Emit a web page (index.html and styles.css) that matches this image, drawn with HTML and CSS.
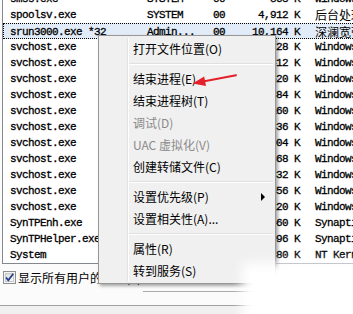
FILE: index.html
```html
<!DOCTYPE html>
<html>
<head>
<meta charset="utf-8">
<link rel="stylesheet" href="styles.css">
</head>
<body>
<div class="window">
  <div class="list">
    <div class="row"><span class="c-name">smss.exe</span><span class="c-user">SYSTEM</span><span class="c-cpu">00</span><span class="c-mem">368 K</span><span class="c-desc">Windows 会话管理器</span></div>
    <div class="row"><span class="c-name">spoolsv.exe</span><span class="c-user">SYSTEM</span><span class="c-cpu">00</span><span class="c-mem">4,912 K</span><span class="c-desc cjk">后台处理程序子系统</span></div>
    <div class="row selected"><span class="c-name">srun3000.exe *32</span><span class="c-user">Admin...</span><span class="c-cpu">00</span><span class="c-mem">10,164 K</span><span class="c-desc cjk">深澜宽带认证客户端</span></div>
    <div class="row"><span class="c-name">svchost.exe</span><span class="c-user">SYSTEM</span><span class="c-cpu">00</span><span class="c-mem">5,728 K</span><span class="c-desc">Windows 服务主进程</span></div>
    <div class="row"><span class="c-name">svchost.exe</span><span class="c-user">SYSTEM</span><span class="c-cpu">00</span><span class="c-mem">3,412 K</span><span class="c-desc">Windows 服务主进程</span></div>
    <div class="row"><span class="c-name">svchost.exe</span><span class="c-user">SYSTEM</span><span class="c-cpu">00</span><span class="c-mem">18,520 K</span><span class="c-desc">Windows 服务主进程</span></div>
    <div class="row"><span class="c-name">svchost.exe</span><span class="c-user">SYSTEM</span><span class="c-cpu">00</span><span class="c-mem">2,884 K</span><span class="c-desc">Windows 服务主进程</span></div>
    <div class="row"><span class="c-name">svchost.exe</span><span class="c-user">SYSTEM</span><span class="c-cpu">00</span><span class="c-mem">6,160 K</span><span class="c-desc">Windows 服务主进程</span></div>
    <div class="row"><span class="c-name">svchost.exe</span><span class="c-user">SYSTEM</span><span class="c-cpu">00</span><span class="c-mem">1,836 K</span><span class="c-desc">Windows 服务主进程</span></div>
    <div class="row"><span class="c-name">svchost.exe</span><span class="c-user">SYSTEM</span><span class="c-cpu">00</span><span class="c-mem">23,004 K</span><span class="c-desc">Windows 服务主进程</span></div>
    <div class="row"><span class="c-name">svchost.exe</span><span class="c-user">SYSTEM</span><span class="c-cpu">00</span><span class="c-mem">3,868 K</span><span class="c-desc">Windows 服务主进程</span></div>
    <div class="row"><span class="c-name">svchost.exe</span><span class="c-user">SYSTEM</span><span class="c-cpu">00</span><span class="c-mem">9,332 K</span><span class="c-desc">Windows 服务主进程</span></div>
    <div class="row"><span class="c-name">svchost.exe</span><span class="c-user">SYSTEM</span><span class="c-cpu">00</span><span class="c-mem">1,556 K</span><span class="c-desc">Windows 服务主进程</span></div>
    <div class="row"><span class="c-name">svchost.exe</span><span class="c-user">SYSTEM</span><span class="c-cpu">00</span><span class="c-mem">4,220 K</span><span class="c-desc">Windows 服务主进程</span></div>
    <div class="row"><span class="c-name">SynTPEnh.exe</span><span class="c-user">Admin...</span><span class="c-cpu">00</span><span class="c-mem">3,460 K</span><span class="c-desc">Synaptics TouchPad</span></div>
    <div class="row"><span class="c-name">SynTPHelper.exe</span><span class="c-user">Admin...</span><span class="c-cpu">00</span><span class="c-mem">1,096 K</span><span class="c-desc">Synaptics Pointing</span></div>
    <div class="row"><span class="c-name">System</span><span class="c-user">SYSTEM</span><span class="c-cpu">00</span><span class="c-mem">380 K</span><span class="c-desc">NT Kernel &amp; System</span></div>
  </div>

  <div class="options">
    <svg class="check" width="13" height="13" viewBox="0 0 13 13">
      <defs>
        <linearGradient id="cb" x1="0" y1="0" x2="1" y2="1">
          <stop offset="0" stop-color="#d8dadc"/>
          <stop offset="1" stop-color="#fbfbfb"/>
        </linearGradient>
      </defs>
      <rect x="0.5" y="0.5" width="12" height="12" fill="#f4f4f4" stroke="#8e8f8f"/>
      <rect x="2.5" y="2.5" width="8" height="8" fill="url(#cb)" stroke="#c6c8ca"/>
      <path d="M3 6.5 L5.3 9.2 L10.2 2.8" fill="none" stroke="#2c3f8c" stroke-width="1.8"/>
    </svg>
    <span class="opt-label">显示所有用户的进程(S)</span>
  </div>

  <div class="actions"><div class="btn-edge"></div></div>

  <div class="status"></div>

  <div class="menu">
    <div class="item">打开文件位置(O)</div>
    <div class="sep"></div>
    <div class="item">结束进程(E)</div>
    <div class="item">结束进程树(T)</div>
    <div class="item disabled">调试(D)</div>
    <div class="item disabled">UAC 虚拟化(V)</div>
    <div class="item">创建转储文件(C)</div>
    <div class="sep"></div>
    <div class="item has-sub">设置优先级(P)</div>
    <div class="item">设置相关性(A)...</div>
    <div class="sep"></div>
    <div class="item">属性(R)</div>
    <div class="item">转到服务(S)</div>
  </div>

  <svg class="arrow" width="60" height="30" viewBox="185 66 60 30">
    <line x1="236" y1="75.3" x2="203" y2="81.6" stroke="#e4202a" stroke-width="2" stroke-linecap="round"/>
    <polygon points="192.5,83.6 204.2,76.6 206,86" fill="#e4202a"/>
  </svg>

  <div class="blur"></div>
</div>
</body>
</html>
```

FILE: styles.css
```css
html, body {
  margin: 0;
  padding: 0;
}
body {
  width: 353px;
  height: 314px;
  overflow: hidden;
  background: #fbfbfb;
}
.window {
  position: relative;
  width: 353px;
  height: 314px;
  overflow: hidden;
  display: flex;
  flex-direction: column;
}
.list {
  margin-top: -9px;
  margin-left: 2px;
  margin-right: -40px;
  border-left: 1px solid #828790;
  border-bottom: 1px solid #828790;
  background: #fff;
  display: flex;
  flex-direction: column;
  flex: none;
}
.row {
  height: 16px;
  box-sizing: border-box;
  display: grid;
  grid-template-columns: 137px 66px 25px 62px 1fr;
  align-items: center;
  padding-left: 7px;
  font-family: "Liberation Mono", monospace;
  font-size: 11px;
  letter-spacing: -0.6px;
  -webkit-text-stroke: 0.3px #000;
  color: #000;
  white-space: nowrap;
  overflow: hidden;
  line-height: 16px;
}
.row.selected {
  background: #e2ecf8;
  border: 1px dotted #000;
  padding-left: 6px;
}
.c-mem {
  text-align: right;
}
.c-desc {
  padding-left: 15px;
  overflow: hidden;
}
.c-desc.cjk {
  font-family: "Noto Sans CJK SC", sans-serif;
  font-size: 12px;
  letter-spacing: 0;
  -webkit-text-stroke: 0;
}
.options {
  margin-top: 7px;
  margin-left: 3px;
  height: 13px;
  display: flex;
  align-items: center;
  gap: 2px;
  flex: none;
}
.check {
  display: block;
  flex: none;
}
.opt-label {
  font-family: "Noto Sans CJK SC", sans-serif;
  font-size: 12px;
  line-height: 13px;
  color: #000;
  white-space: nowrap;
}
.actions {
  margin-top: 7px;
  height: 14px;
  display: flex;
  justify-content: flex-end;
  flex: none;
}
.btn-edge {
  width: 210px;
  border-top: 1px solid #a9a9a9;
}
.status {
  flex: 1;
  border-top: 1px solid #a0a0a0;
  background: #f0f0f0;
}
.menu {
  position: absolute;
  left: 98px;
  top: 35px;
  width: 176px;
  border: 1px solid #979797;
  background: #f0f0f0;
  padding: 2px 0 1px;
  box-shadow: 2px 2px 3px rgba(0, 0, 0, 0.35);
  font-family: "Noto Sans CJK SC", sans-serif;
  font-size: 12px;
  color: #000;
}
.menu::before {
  content: "";
  position: absolute;
  left: 28px;
  top: 2px;
  bottom: 2px;
  width: 1px;
  background: #e2e3e3;
  border-right: 1px solid #fff;
}
.item {
  position: relative;
  height: 22px;
  line-height: 22px;
  padding-left: 34px;
  white-space: nowrap;
}
.item.disabled {
  color: #8a8a8a;
}
.item.has-sub::after {
  content: "";
  position: absolute;
  right: 10px;
  top: 7px;
  border-left: 4px solid #000;
  border-top: 4px solid transparent;
  border-bottom: 4px solid transparent;
}
.sep {
  height: 8px;
  margin-left: 30px;
  margin-right: 2px;
  position: relative;
}
.sep::before {
  content: "";
  position: absolute;
  left: 0;
  right: 0;
  top: 3px;
  height: 1px;
  background: #e0e0e0;
  border-bottom: 1px solid #fff;
}
.arrow {
  position: absolute;
  left: 185px;
  top: 66px;
}
.blur {
  position: absolute;
  left: 242px;
  top: 263px;
  width: 140px;
  height: 80px;
  background: #fff;
  filter: blur(6px);
}
```
